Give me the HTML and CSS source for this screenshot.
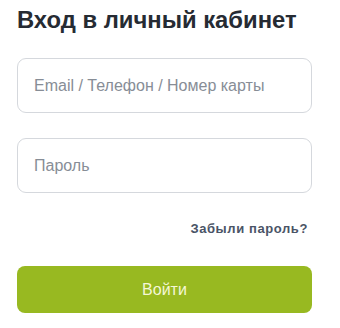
FILE: index.html
```html
<!DOCTYPE html>
<html lang="ru">
  <head>
    <meta charset="UTF-8" />
    <meta name="viewport" content="width=device-width, initial-scale=1.0" />
    <title>Вход в личный кабинет</title>
    <link rel="stylesheet" href="styles.css">
  </head>
  <body>
    <div class="login">
      <h1>Вход в личный кабинет</h1>
      <input type="text" class="field" placeholder="Email / Телефон / Номер карты" />
      <input type="password" class="field" placeholder="Пароль" />
      <div class="forgot-row">
        <a href="#" class="forgot">Забыли пароль?</a>
      </div>
      <button class="submit">Войти</button>
    </div>
  </body>
</html>
```

FILE: styles.css
```css
body {
  font-family: "Liberation Sans", Arial, sans-serif;
  margin: 0;
  padding: 0;
  background-color: #ffffff;
}
.login {
  display: flex;
  flex-direction: column;
  padding: 5px 28px 0 17px;
}
.login h1 {
  margin: 0 0 24px 0;
  font-size: 23.8px;
  line-height: 29px;
  font-weight: bold;
  color: #262b33;
}
.field {
  box-sizing: border-box;
  height: 55px;
  margin-bottom: 25px;
  padding: 0 16px;
  border: 1px solid #d5d8dd;
  border-radius: 9px;
  font-family: inherit;
  font-size: 16px;
  color: #262b33;
  outline: none;
}
.field::placeholder {
  color: #878d96;
}
.field:last-of-type {
  margin-bottom: 0;
}
.forgot-row {
  display: flex;
  justify-content: flex-end;
  padding: 29px 4px 0 0;
  height: 44px;
}
.forgot {
  font-size: 13px;
  line-height: 14px;
  font-weight: bold;
  letter-spacing: 0.6px;
  color: #4a5466;
  text-decoration: none;
}
.submit {
  height: 47px;
  border: none;
  border-radius: 8px;
  background-color: #98b921;
  color: #f4f7d6;
  font-family: inherit;
  font-size: 16px;
  cursor: pointer;
}
```
